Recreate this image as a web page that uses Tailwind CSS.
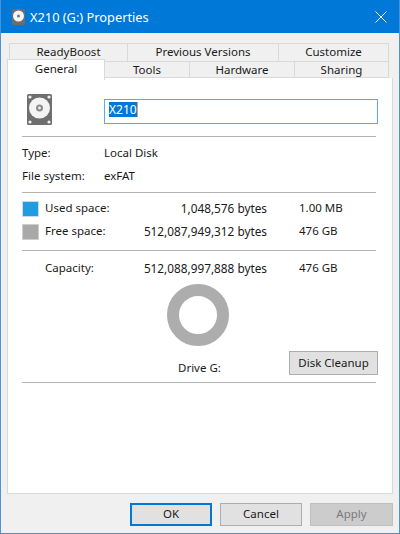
<!DOCTYPE html>
<html lang="en">
<head>
    <meta charset="UTF-8">
    <script src="https://cdn.jsdelivr.net/npm/@tailwindcss/browser@4"></script>
    <title>X210 (G:) Properties</title>
</head>
<body class="bg-[#f0f0f0]">
    <div class="w-[400px] h-[534px] flex flex-col border border-[#4a93d6] border-t-0 bg-[#f0f0f0] text-[11.5px] leading-[16px] text-[#1a1a1a] font-['Noto_Sans',sans-serif] overflow-hidden">
        <!-- title bar -->
        <div class="h-[33px] -mx-px bg-[#0078d7] flex items-center text-white shrink-0">
            <svg class="ml-[12px] w-[13px] h-[16px]" viewBox="0 0 13 16">
                <rect width="13" height="16" rx="1" fill="#6d6d6d"/>
                <circle cx="6.5" cy="7" r="5.5" fill="#f5f5f5"/>
                <circle cx="6.5" cy="7" r="1.5" fill="#777"/>
            </svg>
            <span class="ml-[5px] text-[12.8px]">X210 (G:) Properties</span>
            <svg class="ml-auto mr-[13px] w-[12px] h-[12px]" viewBox="0 0 12 12" fill="none" stroke="white" stroke-width="1">
                <path d="M0.5 0.5 L11.5 11.5 M11.5 0.5 L0.5 11.5"/>
            </svg>
        </div>

        <!-- tabs -->
        <div class="pl-[8px] pt-[10px] shrink-0">
            <div class="flex h-[18px] text-center">
                <div class="w-[119px] bg-[#f0f0f0] border border-b-0 border-[#d9d9d9]">ReadyBoost</div>
                <div class="w-[151px] bg-[#f0f0f0] border border-b-0 border-l-0 border-[#d9d9d9]">Previous Versions</div>
                <div class="w-[110px] bg-[#f0f0f0] border border-b-0 border-l-0 border-[#d9d9d9]">Customize</div>
            </div>
            <div class="flex h-[17px] text-center relative">
                <div class="absolute -left-[2px] -top-[2px] w-[98px] h-[21px] pt-[1px] bg-white border border-b-0 border-[#d9d9d9] z-10">General</div>
                <div class="ml-[96px] w-[85px] border border-l-0 border-[#d9d9d9]">Tools</div>
                <div class="w-[105px] border border-l-0 border-[#d9d9d9]">Hardware</div>
                <div class="w-[94px] border border-l-0 border-[#d9d9d9]">Sharing</div>
            </div>
        </div>

        <!-- general panel -->
        <div class="mx-[6px] h-[416px] bg-white border border-t-0 border-[#d9d9d9] px-[14px] shrink-0">
            <div class="flex h-[59px] border-b border-[#b4b4b4] w-[354px]">
                <svg class="ml-[5px] mt-[16px] w-[25px] h-[31px] shrink-0" viewBox="0 0 25 31">
                    <rect width="25" height="31" rx="1.5" fill="#6f6f6f"/>
                    <circle cx="3" cy="3" r="1.6" fill="#f2f2f2"/>
                    <circle cx="22" cy="3" r="1.6" fill="#f2f2f2"/>
                    <circle cx="3" cy="28" r="1.6" fill="#f2f2f2"/>
                    <circle cx="22" cy="28" r="1.6" fill="#f2f2f2"/>
                    <circle cx="12.5" cy="14" r="10.5" fill="#f4f4f4"/>
                    <circle cx="12.5" cy="14" r="3.5" fill="#8c8c8c"/>
                    <circle cx="12.5" cy="14" r="1.4" fill="#eee"/>
                </svg>
                <div class="ml-[52px] mt-[21px] w-[274px] h-[25px] border border-[#5ea8e6] pl-[4px] pt-[2px] flex items-start shrink-0">
                    <span class="bg-[#0078d7] text-white text-[12px] leading-[15px] border-r border-[#e8a050]">X210</span>
                </div>
            </div>

            <div class="h-[56px] border-b border-[#b4b4b4] w-[354px] pt-[8px]">
                <div class="flex h-[23px]"><span class="w-[82px]">Type:</span><span>Local Disk</span></div>
                <div class="flex h-[23px]"><span class="w-[82px]">File system:</span><span>exFAT</span></div>
            </div>

            <div class="h-[58px] border-b border-[#b4b4b4] w-[354px] pt-[8px] leading-[14px]">
                <div class="flex h-[23px] items-start">
                    <span class="w-[17px] h-[16px] bg-[#1e9de0] border border-[#c8dcea] shrink-0"></span>
                    <span class="w-[61px] ml-[6px] whitespace-nowrap">Used space:</span>
                    <span class="w-[161px] text-right text-[11.8px]">1,048,576 bytes</span>
                    <span class="ml-[32px]">1.00 MB</span>
                </div>
                <div class="flex h-[23px] items-start">
                    <span class="w-[17px] h-[16px] bg-[#a9a9a9] border border-[#cfcfcf] shrink-0"></span>
                    <span class="w-[61px] ml-[6px] whitespace-nowrap">Free space:</span>
                    <span class="w-[161px] text-right text-[11.8px]">512,087,949,312 bytes</span>
                    <span class="ml-[32px]">476 GB</span>
                </div>
            </div>

            <div class="flex pt-[9px] h-[33px]">
                <span class="w-[61px] ml-[23px]">Capacity:</span>
                <span class="w-[161px] text-right text-[11.8px]">512,088,997,888 bytes</span>
                <span class="ml-[32px]">476 GB</span>
            </div>

            <div class="w-[62px] h-[62px] ml-[145px] rounded-full border-[12px] border-[#adadad]"></div>

            <div class="flex w-[356px] h-[36px] pt-[5px] items-start">
                <span class="ml-[156px] mt-[9px]">Drive G:</span>
                <button class="ml-auto w-[89px] h-[24px] pb-[1px] bg-[#e1e1e1] border border-[#adadad]">Disk Cleanup</button>
            </div>
            <div class="w-[354px] border-t border-[#b4b4b4]"></div>
        </div>

        <!-- dialog buttons -->
        <div class="flex pt-[9px] pl-[129px] gap-[8px] shrink-0">
            <button class="w-[82px] h-[23px] pb-[1px] bg-[#e1e1e1] border-2 border-[#0078d7]">OK</button>
            <button class="w-[82px] h-[23px] pb-[1px] bg-[#e1e1e1] border border-[#adadad]">Cancel</button>
            <button class="w-[83px] h-[23px] pb-[1px] bg-[#cccccc] border border-[#bfbfbf] text-[#7a7a7a]">Apply</button>
        </div>
    </div>
</body>
</html>
